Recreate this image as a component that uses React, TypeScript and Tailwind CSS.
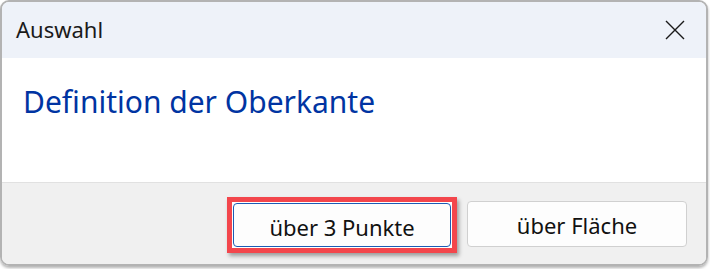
const font = { fontFamily: '"Noto Sans", "Open Sans", sans-serif' };

function CloseIcon() {
  return (
    <svg width="20" height="20" viewBox="0 0 20 20" className="text-[#1a1a1a]">
      <path d="M1 1 L19 19 M19 1 L1 19" stroke="currentColor" strokeWidth="1.4" fill="none" />
    </svg>
  );
}

export default function App() {
  return (
    <div className="w-[710px] h-[269px] bg-white" style={font}>
      <div className="w-[708px] h-[266px] border-2 border-[#b3b3b3] rounded-[9px] overflow-hidden flex flex-col shadow-[0_2px_3px_rgba(0,0,0,0.3)]">
        {/* Title bar */}
        <div className="h-[56px] shrink-0 bg-[#eef2f9] flex items-center justify-between pl-[14px] pr-[21px]">
          <span className="text-[22px] leading-none text-[#1a1a1a] -mt-[2px]">Auswahl</span>
          <CloseIcon />
        </div>

        {/* Body */}
        <div className="flex-1 bg-white pl-[21px] pt-[23px]">
          <h1 className="text-[30px] leading-[42px] text-[#0034a2]">Definition der Oberkante</h1>
        </div>

        {/* Footer */}
        <div className="h-[82px] shrink-0 border-t border-[#e1e1e1] bg-[#f0f0f0] flex items-center justify-end gap-[10px] pr-[19px]">
          <div className="border-[5px] border-[#f3464c] p-px bg-white shadow-[2px_3px_4px_rgba(0,0,0,0.35)] -mb-[3px]">
            <button className="w-[218px] h-[44px] pt-[3px] rounded-[4px] border border-[#1b5cb5] bg-[#fdfdfd] text-[22px] leading-none text-[#111]">
              über 3 Punkte
            </button>
          </div>
          <button className="w-[220px] h-[46px] pt-[3px] rounded-[4px] border border-[#d0d0d0] bg-[#fdfdfd] text-[22px] leading-none text-[#111]">
            über Fläche
          </button>
        </div>
      </div>
    </div>
  );
}
